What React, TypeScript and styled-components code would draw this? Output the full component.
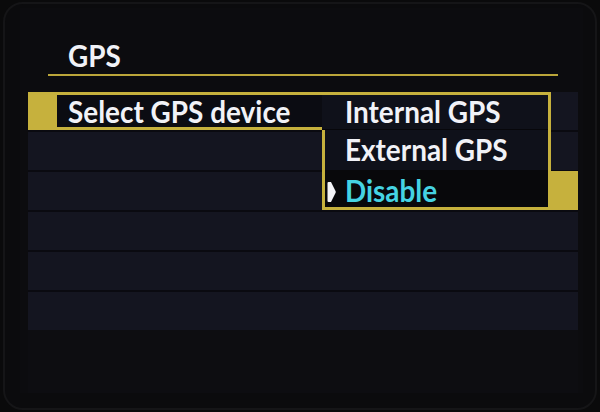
import React from "react";
import styled, { createGlobalStyle } from "styled-components";

const GOLD = "#c6b13d";

const Global = createGlobalStyle`
  html, body { margin: 0; padding: 0; background: #0a0a0b; }
  body { width: 600px; height: 412px; overflow: hidden; font-family: Lato, "Open Sans", sans-serif; }
`;

const Bezel = styled.div`
  width: 600px;
  height: 412px;
  background: #0a0a0b;
  padding: 2px 3px;
  box-sizing: border-box;
`;

const Frame = styled.div`
  height: 408px;
  border: 2px solid #151517;
  border-radius: 20px;
  box-sizing: border-box;
  padding: 4px 12px 0 15px;
  background: #0b0b0d;
`;

const Screen = styled.div`
  height: 385px;
  background: #0c0c0f;
  display: flex;
  flex-direction: column;
`;

const Header = styled.div`
  height: 84px;
  display: flex;
  flex-direction: column;
`;

const Text = styled.span`
  display: inline-block;
  transform: scaleX(0.93);
  transform-origin: left center;
`;

const Title = styled.div`
  padding: 29px 0 0 48px;
  font-size: 30px;
  line-height: 36px;
  font-weight: 700;
  color: #f1f2f7;
`;

const Rule = styled.div`
  margin: 1px 0 0 28px;
  width: 510px;
  height: 2px;
  background: #bba63a;
`;

const Menu = styled.div`
  position: relative;
  margin-left: 8px;
  width: 550px;
  display: flex;
  flex-direction: column;
  gap: 2px;
  background: #0a0a10;
`;

const Row = styled.div`
  height: 38px;
  background: #141520;
  display: flex;
`;

const SelectedMark = styled.div`
  width: 29px;
  background: ${GOLD};
`;

const Label = styled.div`
  width: 494px;
  box-sizing: border-box;
  border-top: 3px solid ${GOLD};
  border-bottom: 3px solid ${GOLD};
  background: #0b0c12;
  padding-left: 11px;
  font-size: 30px;
  line-height: 32px;
  font-weight: 700;
  color: #f1f2f7;
  white-space: nowrap;
`;

const Dropdown = styled.div`
  position: absolute;
  left: 294px;
  top: 0;
  width: 229px;
  box-sizing: border-box;
  border-top: 3px solid ${GOLD};
  border-right: 3px solid ${GOLD};
  border-bottom: 3px solid ${GOLD};
  display: flex;
  flex-direction: column;
`;

const Option = styled.div<{ $h: number; $pt: number; $first?: boolean; $active?: boolean }>`
  position: relative;
  height: ${(p) => p.$h}px;
  box-sizing: border-box;
  padding-top: ${(p) => p.$pt}px;
  padding-left: ${(p) => (p.$first ? 23 : 20)}px;
  border-left: ${(p) => (p.$first ? "none" : `3px solid ${GOLD}`)};
  border-bottom: ${(p) => (p.$first ? "1px solid #07070b" : "none")};
  background: ${(p) => (p.$active ? "#08080b" : "#0f111a")};
  font-size: 30px;
  line-height: 32px;
  font-weight: 700;
  color: ${(p) => (p.$active ? "#45d3e3" : "#f1f2f7")};
  white-space: nowrap;
  ${(p) =>
    p.$active
      ? `&::after {
          content: "";
          position: absolute;
          left: calc(100% + 3px);
          top: 1px;
          bottom: -3px;
          width: 27px;
          background: ${GOLD};
        }`
      : ""}
`;

const Pointer = styled.svg`
  position: absolute;
  left: 2px;
  top: 12px;
  width: 9px;
  height: 20px;
`;

const Footer = styled.div`
  flex: 1;
  margin-left: 8px;
  width: 550px;
  background: #0d0d11;
`;

export default function App() {
  return (
    <>
      <Global />
      <Bezel>
        <Frame>
          <Screen>
            <Header>
              <Title>
                <Text>GPS</Text>
              </Title>
              <Rule />
            </Header>
            <Menu>
              <Row>
                <SelectedMark />
                <Label>
                  <Text>Select GPS device</Text>
                </Label>
              </Row>
              <Row />
              <Row />
              <Row />
              <Row />
              <Row />
              <Dropdown>
                <Option $h={35} $pt={0} $first>
                  <Text>Internal GPS</Text>
                </Option>
                <Option $h={40} $pt={3}>
                  <Text>External GPS</Text>
                </Option>
                <Option $h={37} $pt={4} $active>
                  <Pointer viewBox="0 0 9 20">
                    <path d="M0.5 1 Q0.5 0 1.5 0 H4 L8.6 9.2 Q9 10 8.6 10.8 L4 20 H1.5 Q0.5 20 0.5 19 Z" fill="#f4f4f8" />
                  </Pointer>
                  <Text>Disable</Text>
                </Option>
              </Dropdown>
            </Menu>
            <Footer />
          </Screen>
        </Frame>
      </Bezel>
    </>
  );
}
